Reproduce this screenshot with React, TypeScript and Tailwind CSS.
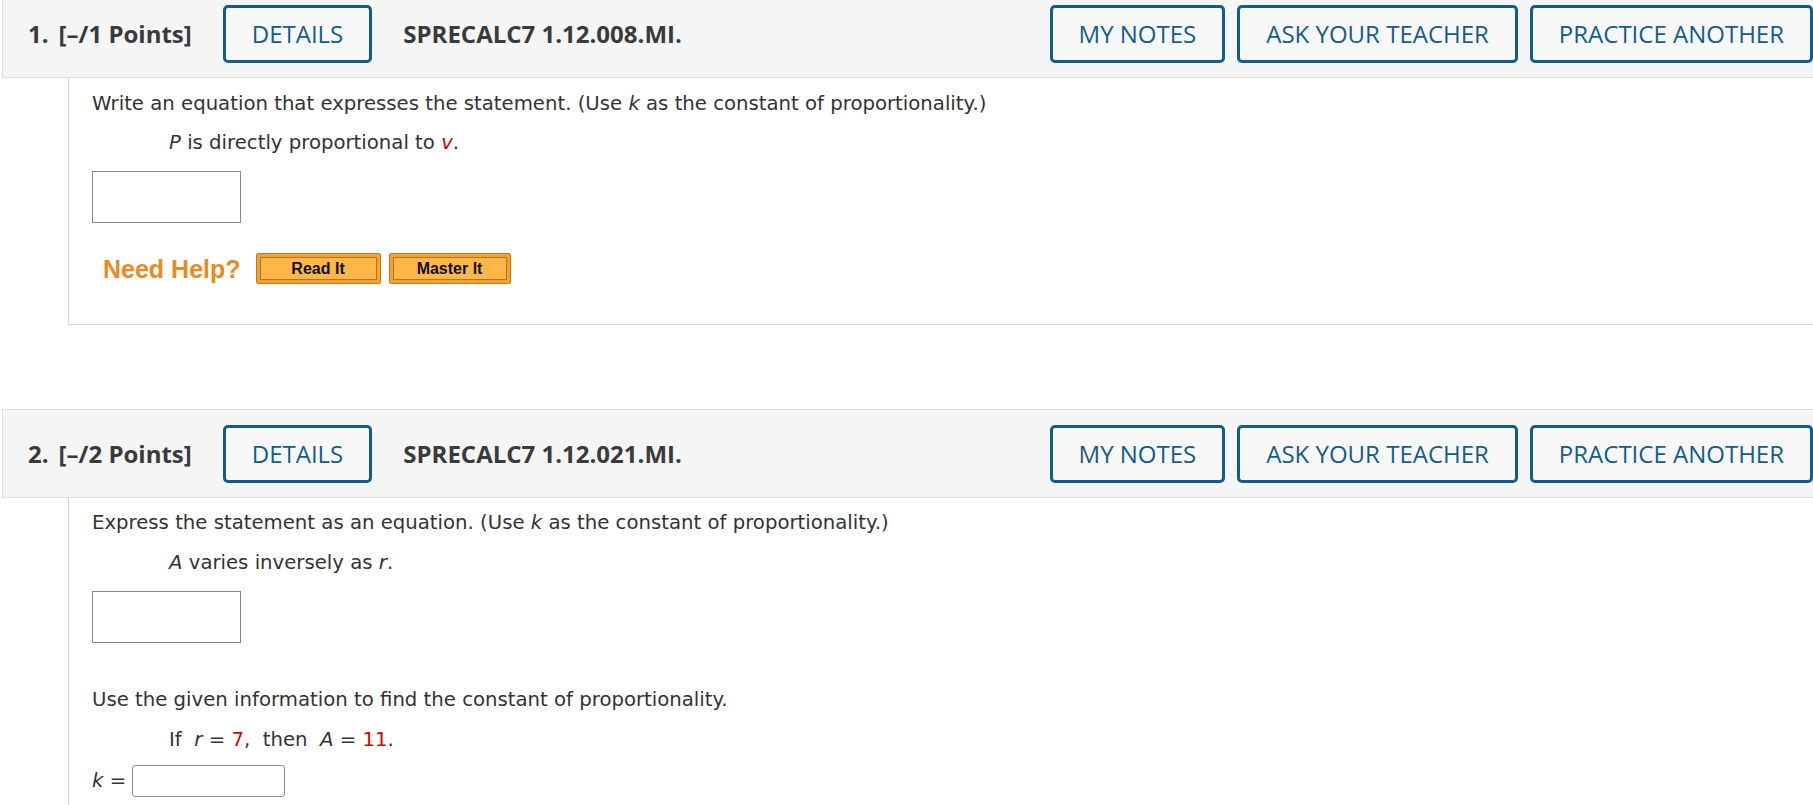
import React from "react";

const bodyFont = "font-['DejaVu_Sans',Verdana,sans-serif]";

function HeaderButton({ children, className = "" }: { children: React.ReactNode; className?: string }) {
  return (
    <button
      type="button"
      className={`h-[58px] px-[26px] rounded-[5px] border-[3px] border-[#135d8e] bg-[#f7f7f7] text-[24px] font-medium text-[#135d8e] leading-none ${className}`}
    >
      {children}
    </button>
  );
}

function QuestionHeader({ num, pts, code }: { num: number; pts: number; code: string }) {
  return (
    <div className="ml-[2px] h-[89px] flex items-center pl-[25px] bg-[#f5f5f5] border border-r-0 border-[#dddddd] font-['Open_Sans',sans-serif] text-[#3a3a3a]">
      <span className="text-[24px] font-bold">{num}.</span>
      <span className="ml-[10px] text-[24px] font-bold">[–/{pts} Points]</span>
      <HeaderButton className="ml-[31px]">DETAILS</HeaderButton>
      <span className="ml-[31px] text-[24px] font-bold">{code}</span>
      <div className="ml-auto flex gap-[12px]">
        <HeaderButton>MY NOTES</HeaderButton>
        <HeaderButton>ASK YOUR TEACHER</HeaderButton>
        <HeaderButton>PRACTICE ANOTHER</HeaderButton>
      </div>
    </div>
  );
}

function HelpButton({ label, w }: { label: string; w: string }) {
  return (
    <div className={`${w} h-[31px] p-[3px] rounded-[2px] border border-[#c27a2a] bg-[#f6a030]`}>
      <div className="h-full flex items-center justify-center border border-[#b8741f] bg-[#fdb648] font-['Liberation_Sans',Arial,sans-serif] font-bold text-[16px] text-[#111]">
        {label}
      </div>
    </div>
  );
}

const Var = ({ children, red = false }: { children: React.ReactNode; red?: boolean }) => (
  <i className={red ? "text-[#e00000]" : ""}>{children}</i>
);

export default function App() {
  return (
    <div className="w-[1813px] h-[805px] overflow-hidden bg-white">
      <div className="-mt-[11px]">
        <QuestionHeader num={1} pts={1} code="SPRECALC7 1.12.008.MI." />

        <div className={`ml-[68px] border-l border-b border-[#d4d4d4] pl-[23px] pt-[14px] pb-[40px] text-[19.7px] leading-[24px] text-[#333] ${bodyFont}`}>
          <p>
            Write an equation that expresses the statement. (Use <Var>k</Var> as the constant of proportionality.)
          </p>
          <p className="mt-[15px] ml-[77px]">
            <Var>P</Var> is directly proportional to <Var red>v</Var>.
          </p>
          <input className="mt-[16px] block w-[149px] h-[52px] border border-[#8a8a8a] bg-white" />
          <div className="mt-[30px] flex items-center">
            <span className="ml-[11px] font-['Liberation_Sans',Arial,sans-serif] font-bold text-[25px] text-[#ea8a1f]">Need Help?</span>
            <div className="ml-[15px] flex gap-[8px]">
              <HelpButton label="Read It" w="w-[125px]" />
              <HelpButton label="Master It" w="w-[122px]" />
            </div>
          </div>
        </div>

        <div className="mt-[84px]">
          <QuestionHeader num={2} pts={2} code="SPRECALC7 1.12.021.MI." />
        </div>

        <div className={`ml-[68px] border-l border-[#d4d4d4] pl-[23px] pt-[13px] pb-[40px] text-[19.7px] leading-[24px] text-[#333] ${bodyFont}`}>
          <p>
            Express the statement as an equation. (Use <Var>k</Var> as the constant of proportionality.)
          </p>
          <p className="mt-[16px] ml-[77px]">
            <Var>A</Var> varies inversely as <Var>r</Var>.
          </p>
          <input className="mt-[16px] block w-[149px] h-[52px] border border-[#8a8a8a] bg-white" />
          <p className="mt-[45px]">Use the given information to find the constant of proportionality.</p>
          <p className="mt-[16px] ml-[77px] whitespace-pre">
            If  <Var>r</Var> = <span className="text-[#e00000]">7</span>,  then  <Var>A</Var> = <span className="text-[#e00000]">11</span>.
          </p>
          <div className="mt-[13px] flex items-center">
            <span>
              <Var>k</Var> =
            </span>
            <input className="ml-[6px] w-[153px] h-[32px] rounded-[3px] border border-[#8f8f8f] bg-white" />
          </div>
        </div>
      </div>
    </div>
  );
}
